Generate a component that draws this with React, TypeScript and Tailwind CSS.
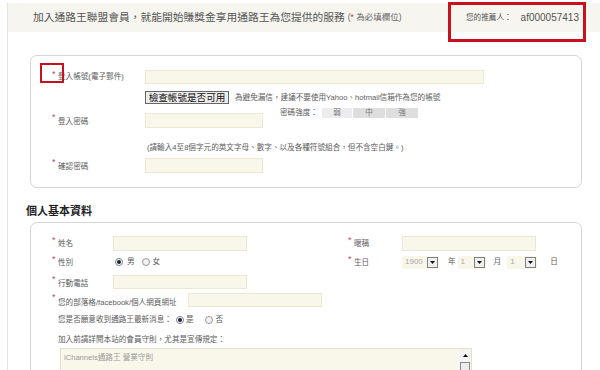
import React from "react";

function Star() {
  return (
    <span className="w-[6px] shrink-0 self-start text-[9px] leading-[9px] text-[#b04a78]">*</span>
  );
}

function Field({ w }: { w: string }) {
  return <div className={`h-full border border-[#ede7d4] bg-[#f9f6ea] ${w}`} />;
}

function Radio({ checked }: { checked?: boolean }) {
  return checked ? (
    <span className="flex h-[8px] w-[8px] shrink-0 items-center justify-center rounded-full border border-[#6f8398] bg-white">
      <span className="block h-[4px] w-[4px] rounded-full bg-[#222]" />
    </span>
  ) : (
    <span className="block h-[8px] w-[8px] shrink-0 rounded-full border border-[#9a9a9a] bg-[#f2f2f2]" />
  );
}

function Select({ value, w }: { value: string; w: string }) {
  return (
    <div className={`flex h-[13px] items-center justify-between bg-[#f9f6ea] pl-[3px] pr-[1px] ${w}`}>
      <span className="text-[8px] leading-none text-[#aaa]">{value}</span>
      <span className="flex h-[11px] w-[11px] items-center justify-center border border-[#808080] bg-[#f0f0f0]">
        <svg width="5" height="3" viewBox="0 0 5 3">
          <path d="M0 0 H5 L2.5 3 Z" fill="#111" />
        </svg>
      </span>
    </div>
  );
}

export default function App() {
  return (
    <div className="relative h-[370px] w-[600px] overflow-hidden bg-white text-[#5c5c5c] [font-family:'Liberation_Sans','Noto_Sans_CJK_TC',sans-serif]">
      <div className="ml-[7px] h-full border-l border-[#e2e2e2]">
        {/* header */}
        <div className="mt-[3px] flex h-[29px] items-center bg-[#f6f5ef] pl-[25px]">
          <span className="text-[10.75px] leading-none text-[#555]">
            加入通路王聯盟會員，就能開始賺獎金享用通路王為您提供的服務
          </span>
          <span className="ml-[3px] text-[8.5px] leading-none text-[#666]">
            (<span className="text-[#c0392b]">*</span> 為必填欄位)
          </span>
          <span className="ml-auto mr-[21px] flex items-center leading-none text-[#555]">
            <span className="text-[7.6px]">您的推薦人：</span>
            <span className="ml-[9px] text-[10px]">af000057413</span>
          </span>
        </div>

        {/* account panel */}
        <div className="ml-[22px] mt-[23px] h-[133px] w-[552px] rounded-[7px] border border-[#d5d5d5] pl-[21px] pt-[14px] text-[7.6px]">
          <div className="flex h-[14px]">
            <div className="flex w-[93px]">
              <Star />
              <span className="self-center leading-none">登入帳號(電子郵件)</span>
            </div>
            <Field w="w-[339px]" />
          </div>

          <div className="mt-[7px] flex h-[13px] items-center pl-[93px]">
            <div className="flex h-[13px] w-[84px] items-center justify-center border border-[#666] bg-[#ececec] text-[9.6px] leading-none text-[#111]">
              檢查帳號是否可用
            </div>
            <span className="ml-[6px] leading-none">
              為避免漏信，建議不要使用Yahoo、hotmail信箱作為您的帳號
            </span>
          </div>

          <div className="mt-[4px] flex h-[10px] items-center pl-[228px]">
            <span className="leading-none">密碼強度：</span>
            <div className="ml-[4px] flex h-[10px] text-[#777]">
              <span className="flex w-[30px] items-center justify-center bg-[#ececec] leading-none">弱</span>
              <span className="ml-px flex w-[32px] items-center justify-center bg-[#dedede] leading-none">中</span>
              <span className="ml-px flex w-[32px] items-center justify-center bg-[#dedede] leading-none">強</span>
            </div>
          </div>

          <div className="-mt-[5px] flex h-[15px]">
            <div className="flex w-[93px]">
              <Star />
              <span className="mt-[5px] leading-none">登入密碼</span>
            </div>
            <Field w="w-[118px]" />
          </div>

          <div className="mt-[15px] pl-[95px] leading-[10px]">
            (請輸入4至8個字元的英文字母、數字、以及各種符號組合，但不含空白鍵。)
          </div>

          <div className="mt-[5px] flex h-[15px]">
            <div className="flex w-[93px]">
              <Star />
              <span className="mt-[5px] leading-none">確認密碼</span>
            </div>
            <Field w="w-[118px]" />
          </div>
        </div>

        {/* heading */}
        <div className="ml-[18px] mt-[18px] text-[11px] font-bold leading-[11px] text-[#222]">
          個人基本資料
        </div>

        {/* personal panel */}
        <div className="ml-[22px] mt-[5px] h-[200px] w-[552px] rounded-[7px] border border-[#d5d5d5] pl-[21px] pt-[13px] text-[7.6px]">
          <div className="grid h-[15px] grid-cols-[296px_auto]">
            <div className="flex">
              <div className="flex w-[61px]">
                <Star />
                <span className="mt-[4px] leading-none">姓名</span>
              </div>
              <Field w="w-[134px]" />
            </div>
            <div className="flex">
              <div className="flex w-[54px]">
                <Star />
                <span className="mt-[4px] leading-none">暱稱</span>
              </div>
              <Field w="w-[134px]" />
            </div>
          </div>

          <div className="mt-[4px] grid h-[14px] grid-cols-[296px_auto]">
            <div className="flex items-center">
              <div className="flex h-full w-[61px]">
                <Star />
                <span className="mt-[4px] leading-none">性別</span>
              </div>
              <span className="ml-[2px] block"><Radio checked /></span>
              <span className="ml-[4px] leading-none">男</span>
              <span className="ml-[7px] block"><Radio /></span>
              <span className="ml-[3px] leading-none">女</span>
            </div>
            <div className="flex items-center">
              <div className="flex h-full w-[54px]">
                <Star />
                <span className="mt-[4px] leading-none">生日</span>
              </div>
              <Select value="1900" w="w-[37px]" />
              <span className="ml-[9px] leading-none">年</span>
              <span className="ml-[2px] block"><Select value="1" w="w-[28px]" /></span>
              <span className="ml-[8px] leading-none">月</span>
              <span className="ml-[6px] block"><Select value="1" w="w-[30px]" /></span>
              <span className="ml-[13px] leading-none">日</span>
            </div>
          </div>

          <div className="mt-[6px] flex h-[14px]">
            <div className="flex w-[61px]">
              <Star />
              <span className="mt-[5px] leading-none">行動電話</span>
            </div>
            <Field w="w-[134px]" />
          </div>

          <div className="mt-[4px] flex h-[14px]">
            <div className="flex w-[136px]">
              <Star />
              <span className="mt-[6px] leading-none">您的部落格/facebook/個人網頁網址</span>
            </div>
            <Field w="w-[134px]" />
          </div>

          <div className="mt-[6px] flex h-[14px] items-center pl-[6px]">
            <span className="leading-none">您是否願意收到通路王最新消息：</span>
            <span className="ml-[4px] block"><Radio checked /></span>
            <span className="ml-[2px] leading-none">是</span>
            <span className="ml-[11px] block"><Radio /></span>
            <span className="ml-[3px] leading-none">否</span>
          </div>

          <div className="mt-[7px] flex h-[12px] items-center pl-[6px]">
            <span className="leading-none">加入前請詳閱本站的會員守則，尤其是宣傳規定：</span>
          </div>

          <div className="ml-[8px] mt-[2px] flex h-[40px] w-[412px] border border-[#e4dfcd] bg-[#f9f6ea]">
            <div className="flex-1 pl-[3px] pt-[5px] leading-none text-[#9a9a9a]">
              iChannels通路王 營業守則
            </div>
            <div className="flex w-[12px] flex-col items-center bg-[#f4f4f4] pt-[5px]">
              <svg width="5" height="3" viewBox="0 0 5 3">
                <path d="M0 3 H5 L2.5 0 Z" fill="#111" />
              </svg>
              <div className="mt-[5px] h-[10px] w-[10px] border border-[#8a8a8a] bg-[#ececec]" />
            </div>
          </div>
        </div>
      </div>

      {/* annotation boxes */}
      <div className="absolute left-[448px] top-[2px] h-[40px] w-[138px] border-[3px] border-[#c8101f]" />
      <div className="absolute left-[40px] top-[63px] h-[20px] w-[24px] border-2 border-[#c8101f]" />
    </div>
  );
}
